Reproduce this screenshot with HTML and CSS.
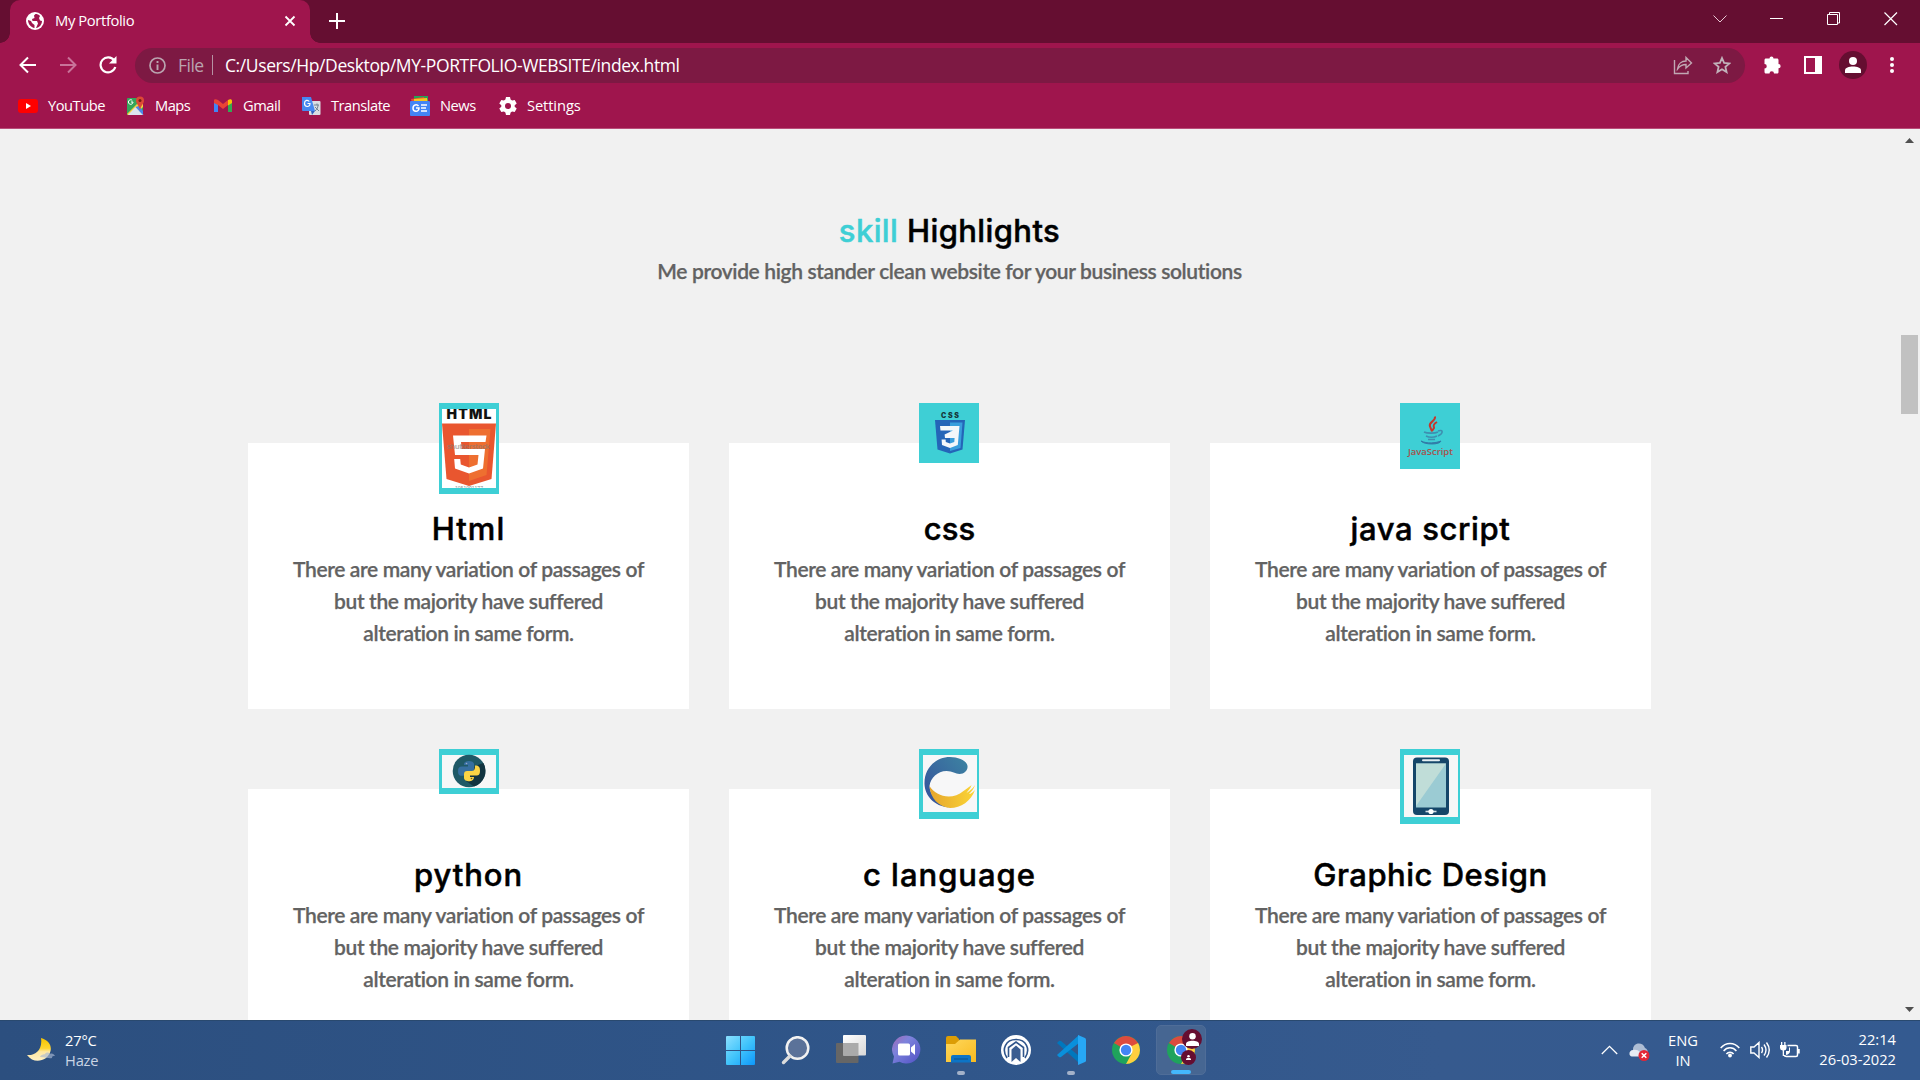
FILE: index.html
```html
<!DOCTYPE html>
<html lang="en">
<head>
<meta charset="utf-8">
<title>My Portfolio</title>
<link rel="stylesheet" href="styles.css">
</head>
<body>
<svg width="0" height="0" class="defs">
  <defs>
    <linearGradient id="win" x1="0" y1="0" x2="1" y2="1"><stop offset="0" stop-color="#8be0ff"/><stop offset=".5" stop-color="#41c4fb"/><stop offset="1" stop-color="#0d98fb"/></linearGradient>
    <linearGradient id="tv" x1="0" y1="0" x2="1" y2="1"><stop offset="0" stop-color="#fff"/><stop offset="1" stop-color="#d8d8d8"/></linearGradient>
    <linearGradient id="chat" x1="0" y1="0" x2="1" y2="1"><stop offset="0" stop-color="#a468b4"/><stop offset=".35" stop-color="#7d83dc"/><stop offset="1" stop-color="#5050c4"/></linearGradient>
    <linearGradient id="fold" x1="0" y1="0" x2="1" y2="1"><stop offset="0" stop-color="#ffd85c"/><stop offset="1" stop-color="#f8ba20"/></linearGradient>
    <linearGradient id="cblue" x1="1" y1="0" x2="0" y2="1"><stop offset="0" stop-color="#3d84a2"/><stop offset="1" stop-color="#354e9b"/></linearGradient>
    <linearGradient id="cyel" x1="0" y1="0" x2="1" y2="0"><stop offset="0" stop-color="#e5a52d"/><stop offset="1" stop-color="#fbd536"/></linearGradient>
    <linearGradient id="moon" x1="0" y1="0" x2="0" y2="1"><stop offset="0" stop-color="#f6c500"/><stop offset=".45" stop-color="#ffd52f"/><stop offset=".6" stop-color="#ffe7a0"/><stop offset="1" stop-color="#fff0c4"/></linearGradient>
    <symbol id="chrome" viewBox="0 0 28 28">
      <circle cx="14" cy="14" r="14" fill="#1fa35c"/>
      <path d="M14 14 1.900 7A14 14 0 0 1 26.100 7Z" fill="#dd4b3e"/>
      <path d="M26.100 7A14 14 0 0 1 14 28L20 17 18 7Z" fill="#ffcf3f"/>
      <path d="M14 7H26.100L20 10Z" fill="#dd4b3e"/>
      <circle cx="14" cy="14" r="6.600" fill="#fff"/><circle cx="14" cy="14" r="5.200" fill="#4285f4"/>
    </symbol>
    <symbol id="person" viewBox="0 0 16 16"><circle cx="8" cy="4" r="4"/><path d="M0 16v-2.500C0 10.500 4 9.500 8 9.500s8 1 8 4V16Z"/></symbol>
  </defs>
</svg>

<header class="browser">
  <div class="tabstrip">
    <div class="tab">
      <svg class="globe" width="18" height="18" viewBox="0 0 18 18"><circle cx="9" cy="9" r="9" fill="#fff"/><path d="M9.500 2 8 3.500 8.500 6 6 7 6.500 9H11l1 2.500-2 4.500c3.500-.5 6-3.500 6-7l-2-.5-1-2.500 1-2C13 2.500 11 2 9.500 2ZM2 8c0 4 3 7.500 6.500 8v-3L6 11 5 9Z" fill="#9f154d"/></svg>
      <span class="tab-title">My Portfolio</span>
      <svg class="tab-close" width="12" height="12" viewBox="0 0 12 12"><path d="m1.500 1.500 9 9M10.500 1.500l-9 9" stroke="#fff" stroke-width="1.800"/></svg>
    </div>
    <svg class="newtab" width="16" height="16" viewBox="0 0 16 16"><path d="M8 0v16M0 8h16" stroke="#fff" stroke-width="2"/></svg>
    <div class="winbtns">
      <svg width="14" height="14" viewBox="0 0 14 14"><path d="m.5 3.500 6.500 6.500 6.500-6.500" fill="none" stroke="#e8c7d4"/></svg>
      <svg width="14" height="14" viewBox="0 0 14 14"><path d="M0 6.500h13" stroke="#fff"/></svg>
      <svg width="14" height="14" viewBox="0 0 14 14"><path d="M.5 2.500h10v10H.5ZM2.500 2V.5h10v10.500H11" fill="none" stroke="#fff"/></svg>
      <svg width="14" height="14" viewBox="0 0 14 14"><path d="m.5.5 12.500 12.500M13 .5.5 13" stroke="#fff" stroke-width="1.200"/></svg>
    </div>
  </div>

  <div class="toolbar">
    <svg width="18" height="18" viewBox="0 0 18 18"><path d="M17 9H2M9 1.500 1.500 9 9 16.500" fill="none" stroke="#fff" stroke-width="2"/></svg>
    <svg width="18" height="18" viewBox="0 0 18 18"><path d="M1 9h15M9 1.500 16.500 9 9 16.500" fill="none" stroke="#c97399" stroke-width="2"/></svg>
    <svg width="18" height="18" viewBox="0 0 18 18"><path d="M15.200 4.500A7.500 7.500 0 1 0 16.300 11" fill="none" stroke="#fff" stroke-width="2.200"/><path d="M17.500 0v7.500H10Z" fill="#fff"/></svg>
    <div class="omnibox">
      <svg width="17" height="17" viewBox="0 0 17 17"><circle cx="8.500" cy="8.500" r="7.500" fill="none" stroke="#baa4af" stroke-width="1.700"/><path d="M8.500 7.500V13M8.500 4v2" stroke="#baa4af" stroke-width="1.900"/></svg>
      <span class="scheme">File</span><span class="bar"></span>
      <span class="url">C:/Users/Hp/Desktop/MY-PORTFOLIO-WEBSITE/index.html</span>
      <svg class="share" width="20" height="20" viewBox="0 0 20 20"><path d="M1.500 5v13.500H15V16M4.500 14C5 8.500 9 6 13 6V2.500L18.500 8 13 13v-3.500c-4 0-6 1-8.500 4.500Z" fill="none" stroke="#c1a7b3" stroke-width="1.400"/></svg>
      <svg class="star" width="18" height="18" viewBox="0 0 18 18"><path d="m9 2 2.100 4.900 5.300.5-4 3.500 1.200 5.200L9 13.300l-4.600 2.800 1.200-5.200-4-3.500 5.300-.5Z" fill="none" stroke="#c1b2ba" stroke-width="1.800"/></svg>
    </div>
    <div class="actions">
      <svg width="18" height="18" viewBox="0 0 18 18" fill="#fff"><path d="M5.500 2.500a2 2 0 0 1 4 0H13c.9 0 1.500.6 1.500 1.500v4a2 2 0 0 1 0 4.300V16c0 1-.6 1.600-1.500 1.600h-3a2.200 2.200 0 0 0-4.500 0H2c-1 0-1.500-.6-1.500-1.500v-3.600a2.200 2.200 0 0 0 0-4.500V4c0-.9.6-1.500 1.500-1.500Z"/></svg>
      <svg width="18" height="18" viewBox="0 0 18 18"><path d="M1 1h16v16H1Z" fill="none" stroke="#fff" stroke-width="2"/><path d="M11 1h6v16h-6Z" fill="#fff"/></svg>
      <span class="avatar"><svg width="16" height="16" fill="#fff"><use href="#person"/></svg></span>
      <svg class="dots" width="4" height="16" viewBox="0 0 4 16" fill="#fff"><circle cx="2" cy="2" r="2"/><circle cx="2" cy="8" r="2"/><circle cx="2" cy="14" r="2"/></svg>
    </div>
  </div>

  <nav class="bookmarks">
    <span><svg width="20" height="20" viewBox="0 0 20 20"><rect y="3" width="20" height="14" rx="3" fill="#f00"/><path d="m8 7 5 3-5 3Z" fill="#fff"/></svg><b>YouTube</b></span>
    <span><svg width="19" height="20" viewBox="0 0 19 20"><rect x="1" y="2" width="16" height="17" rx="1" fill="#35a45a"/><path d="m1 18 14-14 2 2v5L9 19H2Z" fill="#f8d13f"/><path d="m2 19 7.500-8 8 8Z" fill="#dce4ee"/><path d="m13 10 4 5v4L9.500 11Z" fill="#4b86ed"/><path d="M14 14c-1-5-4-6-4-9.500a4 4 0 0 1 8 0C18 8 15 9 14 14Z" fill="#dc4a36"/><circle cx="14" cy="4.500" r="1.500" fill="#751d15"/><path d="M7 6H5M7 6a2.300 2.300 0 1 1-.8-1.700" stroke="#fff" fill="none"/></svg><b>Maps</b></span>
    <span><svg width="19" height="20" viewBox="0 0 19 20"><path d="M0 4v12h4V8Z" fill="#4285f4"/><path d="M18 4v12h-4V8Z" fill="#34a853"/><path d="M0 4.500C0 3 2 3 4 4l5 4 5-4V9l-5 4-5-4-4-2Z" fill="#ea4335"/><path d="M14 4c2-1 4-1 4 1v2l-4 2.500Z" fill="#fbbc04"/></svg><b>Gmail</b></span>
    <span><svg width="20" height="20" viewBox="0 0 20 20"><rect x="8" y="5" width="11.500" height="14" rx="1" fill="#d9dde3"/><path d="M1 1h9l4 14H2a1 1 0 0 1-1-1Z" fill="#4688f1"/><path d="m10 15h4l-3 4Z" fill="#3061be"/><path d="M6.500 7.500H9C9 12 3.500 11 3.500 7.500S7 3.500 8.200 5.500" fill="none" stroke="#fff" stroke-width="1.200"/><path d="M13 9h5m-2-1.500V9m1 0c0 3-1 4-3 6m0-4 4 4" fill="none" stroke="#718292"/></svg><b>Translate</b></span>
    <span><svg width="20" height="20" viewBox="0 0 20 20"><path d="M4 0h14v8H4Z" fill="#23a455"/><path d="m1 3 13-2 2 6H2Z" fill="#e64c35"/><path d="m4 3 13-1 1 6H4Z" fill="#fbc41d"/><rect y="5" width="20" height="15" rx="1" fill="#4385f5"/><path d="M6 12h3c0 4.500-6 4-6 .2C3 8.500 7 8 8.500 10M11 9h6M11 12h5M11 15h6" stroke="#fff" stroke-width="1.500" fill="none"/></svg><b>News</b></span>
    <span><svg width="18" height="18" viewBox="0 0 18 18"><path d="m7 0h4l.6 2.600 1.500.9L15.700 3l2 3.500-2 1.700v1.600l2 1.700-2 3.500-2.600-.5-1.500.9L11 18H7l-.6-2.600-1.500-.9-2.600.5-2-3.500 2-1.700V8.200l-2-1.700 2-3.500 2.600.5 1.500-.9Z" fill="#fff"/><circle cx="9" cy="9" r="3" fill="#9f154d"/></svg><b class="wide">Settings</b></span>
  </nav>
</header>

<div class="viewport">
  <main>
    <div class="heading">
      <h1><em>skill</em> Highlights</h1>
      <p>Me provide high stander clean website for your business solutions</p>
    </div>
    <section class="cards">
      <article>
        <svg class="logo" width="60" height="91" viewBox="0 0 60 91"><path fill="#fff" d="M3 6h54v79H3Z"/><clipPath id="hc"><path d="M3 6h54v79H3Z"/></clipPath><g clip-path="url(#hc)"><text x="7.500" y="16" class="html-word" textLength="45">HTML</text><path d="M3 20.500h54L52.500 76 30 83 7.500 76Z" fill="#e9562f"/><path d="M30 26h21.500l-4 46L30 78Z" fill="#ee6f30"/><path d="M47.500 32.500 46.500 39H22l.7 7H46l-2 19.500-14 5-14-5-.8-9.500h6l.6 5.500 8.200 3 8.500-3L39.500 52H16l-2-19.500Z" fill="#fff"/><text x="8" y="46" class="mark" textLength="43">shutterstock</text><text x="16" y="87" class="tiny" textLength="28">1051091177</text></g></svg>
        <h2 class="t1">Html</h2>
        <p>There are many variation of passages of<br>but the majority have suffered<br>alteration in same form.</p>
      </article>
      <article>
        <svg class="logo" width="60" height="60" viewBox="0 0 60 60"><text x="22" y="14.500" class="css-word" textLength="18">CSS</text><path d="M16 17h30l-2.500 29.500L31 50.500l-12.500-4Z" fill="#2465b8"/><path d="M31 19.500h12.500L41.500 45 31 48Z" fill="#399edc"/><path d="M21 23h19.500l-1.700 19L31 45l-8-3-.4-5.500h4l.2 2.600 4.200 1.500 4.300-1.500.3-4.100H26l-.4-3.500L34 27.500H21.500Z" fill="#f3f7fa"/></svg>
        <h2 class="t2">css</h2>
        <p>There are many variation of passages of<br>but the majority have suffered<br>alteration in same form.</p>
      </article>
      <article>
        <svg class="logo" width="60" height="66" viewBox="0 0 60 66"><path d="M35 13.500c1 5-7 5.500-5 10l2 5M37 19c-5 3-3 4-3 6l-2 3" fill="none" stroke="#c5382c" stroke-width="2"/><path d="M24 29c3 1.500 11 1.500 14 0M26 33c3 1.500 8 1.500 11 0M28 36.500h7M38 28c5-2 6 2 0 5" fill="none" stroke="#3e8fb0" stroke-width="1.600"/><path d="M21 38c6 3 15 2 20 0-1 4-17 4-20 0Z" fill="#327ca8" stroke="#327ca8"/><text x="8" y="51.500" class="js-word" textLength="45">JavaScript</text></svg>
        <h2 class="t3">java script</h2>
        <p>There are many variation of passages of<br>but the majority have suffered<br>alteration in same form.</p>
      </article>
      <article>
        <svg class="logo" width="60" height="45" viewBox="0 0 60 45"><path fill="#f7f7f7" d="M3 6h54v33H3Z"/><circle cx="30" cy="22" r="16.300" fill="#1f5966"/><path d="m36 17 8.500-3A16.300 16.300 0 0 1 35 37.500L27 32Z" fill="#123440"/><path d="M25 15c0-4 10-4 10 0v5c0 2-1 2.500-3 2.500h-4c-2 0-3 1-3 4-5 1-6-1-6-4.500 0-3 1-4.500 4-4.500h6V16h-4Z" fill="#366f9f"/><path d="M36 16.500c4-.5 5 2 5 5 0 4-1 5-4 5h-6V28h4c0 6-10 5-10 1v-4c0-2 1-3 3-3h4c3 0 4-1 4-5.500Z" fill="#fbd445"/><circle cx="27.500" cy="14.500" r=".8" fill="#9ac"/><circle cx="32.500" cy="29.500" r=".8" fill="#65562c"/></svg>
        <h2 class="t4">python</h2>
        <p>There are many variation of passages of<br>but the majority have suffered<br>alteration in same form.</p>
      </article>
      <article>
        <svg class="logo" width="60" height="70" viewBox="0 0 60 70"><path fill="#f7f7f8" d="M4 6h54v57H4Z"/><path d="M30 58.500C15 57 6 47 5.500 35 5 19 17 8 31 8c9 0 17 4 17.500 9 .5 4-3 8-8 8-4 0-7-3-13-3-9 0-16 7-17 15 0 9 9 18 19.500 21.500Z" fill="url(#cblue)"/><path d="M10.500 37c6 10 22 15 34 5 4-3 7-5 8-6-1 4-4 6-5 8 3-2 6-4 8.500-8-1 4-4 7-6 9 2 0 4-2 6-4C52 52 42 59 31 59 20 58 11 49 10.500 37Z" fill="url(#cyel)"/></svg>
        <h2 class="t5">c language</h2>
        <p>There are many variation of passages of<br>but the majority have suffered<br>alteration in same form.</p>
      </article>
      <article>
        <svg class="logo" width="60" height="75" viewBox="0 0 60 75"><path fill="#f7f7f7" d="M4 6h54v62H4Z"/><rect x="13" y="8.500" width="36" height="57.500" rx="4" fill="#154669"/><path d="M16 14.500h30v44H16Z" fill="#9bcbd3"/><path d="M16 14.500h30L16 57Z" fill="#c0ddd8"/><path d="M23 11.300h16" stroke="#e8eef2" stroke-width="2" stroke-linecap="round"/><path d="M25.500 62.500h11" stroke="#d4dee6" stroke-width="1.600"/><circle cx="31" cy="62.500" r="2.600" fill="#fff"/></svg>
        <h2 class="t6">Graphic Design</h2>
        <p>There are many variation of passages of<br>but the majority have suffered<br>alteration in same form.</p>
      </article>
    </section>
  </main>
  <div class="scroll">
    <svg width="9" height="5" viewBox="0 0 9 5"><path d="M4.500 0 9 5H0Z" fill="#505050"/></svg>
    <div class="thumb"></div>
    <svg width="9" height="5" viewBox="0 0 9 5"><path d="M4.500 5 9 0H0Z" fill="#505050"/></svg>
  </div>
</div>

<footer class="taskbar">
  <div class="weather">
    <svg width="30" height="28" viewBox="0 0 30 28"><path d="M15 2c7 2 11 7 9.500 13C22 25 8 29 1 19c7 1 16-4 14-17Z" fill="url(#moon)"/><path d="M14 21c1-3 4-2 5-3 1-2 4-2 5 0 2-1 4 0 5 2-2 0-3 0-3 2-3 1-6-1-12-1Z" fill="#a9b9d2" opacity=".65"/></svg>
    <div><span class="w1">27°C</span><span class="w2">Haze</span></div>
  </div>
  <div class="apps">
    <div class="start"><svg width="29" height="29" viewBox="0 0 29 29" fill="url(#win)"><path d="M1 0h13v14H0V1q0-1 1-1ZM15 0h13q1 0 1 1v13H15ZM0 15h14v14H1q-1 0-1-1ZM15 15h14v13q0 1-1 1H15Z"/></svg></div>
    <div class="start"><svg width="29" height="29" viewBox="0 0 29 29"><circle cx="16.500" cy="12" r="10.800" fill="#5b7299" stroke="#f2f2f2" stroke-width="2.500"/><path d="m9 20-6.500 6.500" stroke="#dcdcdc" stroke-width="3.400" stroke-linecap="round"/></svg></div>
    <div><svg width="30" height="29" viewBox="0 0 30 29"><rect y="8" width="22.500" height="20" rx="1" fill="#666"/><rect x="7" width="23" height="20.500" rx="1" fill="url(#tv)"/><path d="M7 8h15.500v12.500H7Z" fill="#aaa"/></svg></div>
    <div><svg width="29" height="29" viewBox="0 0 29 29"><path d="M14.500.5a14 14 0 1 1-7 26.200L.5 28.500 2 21.500A14 14 0 0 1 14.500.5Z" fill="url(#chat)"/><rect x="6" y="8.500" width="12" height="12" rx="1.500" fill="#fff"/><path d="m19 12.500 4-3.500v11l-4-3.500Z" fill="#fff"/></svg></div>
    <div class="open"><svg width="30" height="29" viewBox="0 0 30 29"><path d="M0 3q0-2 2-2h8l3 3v5H0Z" fill="#dc9d05"/><path d="M0 9h9l5-4.500h16V27H0Z" fill="url(#fold)"/><path d="M5 27.500V22q0-2 2-2h16q2 0 2 2v5.500Z" fill="#0d74c5"/><path d="M8 24h14" stroke="#0a508c"/></svg></div>
    <div><svg width="30" height="30" viewBox="0 0 30 30"><circle cx="15" cy="15" r="15" fill="#fff"/><path d="M6 23C0 14 5 4.500 15 4.500S30 14 24 23M7.500 22v-9.500L15 7l7.500 5.500V22" fill="none" stroke="#30558b" stroke-width="1.600"/><path d="M10.500 27V14.500L15 10.500l4.500 4V27L15 23Z" fill="#3a5d91"/></svg></div>
    <div class="open"><svg width="30" height="30" viewBox="0 0 30 30"><path d="m1 8 2-2q1-.7 2 0l18 15v7Z" fill="#0077bd"/><path d="m1 20 2 2q1 .7 2 0L23 8V0Z" fill="#0990db"/><path d="m22 0 7 3q1 .5 1 1.500v21q0 1-1 1.500l-7 3Z" fill="#27a7f5"/></svg></div>
    <div><svg width="28" height="28"><use href="#chrome"/></svg></div>
    <div class="active"><svg width="28" height="28"><use href="#chrome"/></svg>
      <span class="badge big"><svg width="13" height="13" fill="#fff"><use href="#person"/></svg></span>
      <span class="badge small"><svg width="5" height="5" fill="#fff"><use href="#person"/></svg></span>
    </div>
  </div>
  <div class="tray">
    <svg class="up" width="17" height="10" viewBox="0 0 17 10"><path d="m.8 9 7.700-7.700L16.200 9" fill="none" stroke="#fff" stroke-width="1.300"/></svg>
    <svg class="cloud" width="21" height="18" viewBox="0 0 21 18"><path d="M4 6C5-1 14-1 16 5q3 1 3 6H4Z" fill="#aebdd4"/><path d="M3 13.500C-1 13 0 7 4 7q4-1 7 2l4 4.500Z" fill="#e6ebf3"/><circle cx="15" cy="12.500" r="5.500" fill="#e32636"/><path d="m12.700 10.200 4.600 4.600m0-4.600-4.600 4.600" stroke="#fff" stroke-width="1.500"/></svg>
    <div class="lang"><span>ENG</span><span>IN</span></div>
    <div class="status">
      <svg width="20" height="16" viewBox="0 0 20 16"><path d="M.7 6c5-6 13.600-6 18.600 0M3.600 9c3.500-4.200 9.300-4.200 12.800 0M6.400 12c2-2.500 5.200-2.500 7.200 0" fill="none" stroke="#fff" stroke-width="1.500"/><circle cx="10" cy="13.500" r="1.900" fill="#fff"/></svg>
      <svg width="20" height="18" viewBox="0 0 20 18"><path d="M.8 6H4l5-4.500v15L4 12H.8ZM11.500 6q2 3 0 6M14 3.500q4 5.500 0 11M16.500 1.500q5.500 7.500 0 15" fill="none" stroke="#fff" stroke-width="1.400"/></svg>
      <svg width="20" height="17" viewBox="0 0 20 17"><path d="M7.500 3.500h8.500q1.500 0 1.500 1.500v8q0 1.500-1.500 1.500H6.500q-2 0-2-1.500M19 7v4.500" fill="none" stroke="#fff" stroke-width="1.500"/><path d="M0 3h6.500v3q0 2-2.500 2.500V14H2.700V8.500Q0 8 0 6ZM1 0h1.300v3H1ZM4.200 0h1.300v3H4.200ZM6 13V9h3V5.500h1V9q0 3-4 4Z" fill="#fff"/></svg>
    </div>
    <div class="clock"><span>22:14</span><span>26-03-2022</span></div>
  </div>
</footer>
</body>
</html>
```
FILE: styles.css
```css
* { box-sizing: border-box; }
body { margin: 0; width: 1920px; height: 1080px; overflow: hidden; display: flex; flex-direction: column; font-family: "Open Sans", "Noto Sans", sans-serif; }
svg { display: block; flex: none; }
.defs { position: absolute; }

.browser { height: 129px; background: #9f154d; color: #fff; border-bottom: 1px solid #b84e79; }
.tabstrip { height: 43px; background: #650e31; display: flex; align-items: center; padding-left: 10px; }
.tab { position: relative; width: 300px; height: 43px; background: #9f154d; border-radius: 10px 10px 0 0; display: flex; align-items: center; padding: 0 14px 2px 16px; }
.tab::before, .tab::after { content: ""; position: absolute; bottom: 0; width: 10px; height: 10px; }
.tab::before { left: -10px; background: radial-gradient(circle at 0 0, #650e31 9.5px, #9f154d 10px); }
.tab::after { right: -10px; background: radial-gradient(circle at 100% 0, #650e31 9.5px, #9f154d 10px); }
.tab-title { margin-left: 11px; padding-bottom: 2px; font-size: 14.8px; letter-spacing: -.4px; }
.tab-close { margin-left: auto; }
.newtab { margin: 0 0 1px 19px; }
.winbtns { margin-left: auto; display: flex; gap: 43px; padding: 0 22px 6px 0; }

.toolbar { height: 44px; display: flex; align-items: center; padding-left: 19px; gap: 22px; }
.omnibox { width: 1610px; height: 35px; border-radius: 18px; background: #7d1943; display: flex; align-items: center; padding: 0 14px 0 14px; margin-left: -4px; }
.scheme { margin-left: 12px; color: #baa4af; font-size: 17.5px; letter-spacing: -.5px; width: 26px; }
.bar { width: 1px; height: 20px; background: #b692a3; margin: 0 12px 0 8px; }
.url { font-size: 17.5px; letter-spacing: -.4px; }
.share { margin-left: auto; }
.star { margin-left: 20px; }
.actions { display: flex; align-items: center; margin-left: -3px; }
.actions > * { margin-right: 22px; }
.avatar { width: 28px; height: 28px; border-radius: 50%; background: #650e31; display: grid; place-items: center; margin-left: -5px; }
.actions .avatar { margin-right: 23px; }
.bookmarks { height: 38px; display: grid; grid-template-columns: 108px 88px 87px 109px 89px 1fr; padding: 0 0 1px 18px; }
.bookmarks span { display: flex; align-items: center; gap: 10px; }
.bookmarks b { font-weight: 400; font-size: 14.7px; letter-spacing: -.5px; padding-bottom: 1px; }
.bookmarks .wide { letter-spacing: -.1px; }

.viewport { height: 891px; display: flex; background: #f1f1f1; }
main { width: 1899px; padding: 81px 0 0 248px; overflow: hidden; }
.heading { width: 1403px; text-align: center; }
h1, h2 { margin: 0; font: 500 31px/42px Inter, sans-serif; color: #000; -webkit-text-stroke: .5px; }
h1 { letter-spacing: .4px; }
h1 em { font-style: normal; color: #3ecfd5; }
.t1, .t5 { letter-spacing: 1px; }
.t2 { letter-spacing: .1px; }
.t3 { letter-spacing: .65px; }
.t4 { letter-spacing: .9px; }
.t6 { letter-spacing: .5px; }
p { margin: 0; font: 600 21px/32px Lato, sans-serif; letter-spacing: -.37px; color: #626262; -webkit-text-stroke: .25px #626262; }
.heading p { margin-top: 3px; }
.cards { width: 1403px; margin-top: 156px; display: grid; grid-template-columns: repeat(3, 441px); grid-auto-rows: 266px; gap: 80px 40px; }
article { position: relative; background: #fff; text-align: center; padding-top: 65px; }
article p { margin-top: 3px; }
.logo { position: absolute; top: -40px; left: 191px; background: #3ecfd5; }
article:nth-child(3n) .logo, article:nth-child(3n + 2) .logo { left: 190px; }
.html-word { font: 900 14px Inter, sans-serif; fill: #111; }
.css-word { font: 900 7px Inter, sans-serif; fill: #17383c; }
.js-word { font: 600 9.5px "Open Sans", sans-serif; fill: #a8514b; }
.mark { font: 700 7.5px "Open Sans", sans-serif; fill: #8a7a72; opacity: .6; }
.tiny { font: 5px "Open Sans", sans-serif; fill: #888; }

.scroll { width: 21px; display: flex; flex-direction: column; align-items: center; padding: 9px 1px 8px 0; }
.thumb { width: 17px; height: 79px; background: #c1c1c1; margin: 192px 0 auto 1px; }

.taskbar { height: 60px; display: flex; color: #fff; font-size: 14.7px; line-height: 20px; background: linear-gradient(90deg, #2c4f7f, #30568a 50%, #365a8e 75%, #345a90); position: relative; border-top: 1px solid #29496f; }
.taskbar span { display: block; }
.weather { width: 716px; display: flex; gap: 9px; padding: 9px 0 0 26px; }
.weather svg { margin-top: 6px; }
.w2 { color: #cad5e5; letter-spacing: -.2px; }
.w1 { letter-spacing: -.2px; }
.apps { display: flex; gap: 5px; padding-top: 4px; }
.apps > div { position: relative; width: 50px; height: 50px; display: grid; place-items: center; padding-bottom: 1px; }
.apps > .start { padding: 0 2px 0 0; }
.apps .active { background: #466692; border: 1px solid #4f6d98; border-radius: 5px; }
.open::after, .active::after { content: ""; position: absolute; bottom: 0; left: 21px; width: 8px; height: 4px; border-radius: 2px; background: #a4b2c9; }
.active::after { left: 14px; width: 20px; background: #44b8fc; }
.badge { position: absolute; border-radius: 50%; background: #650e31; }
.apps .badge { display: grid; place-items: center; }
.big { width: 20px; height: 20px; left: 25px; top: 3px; }
.small { width: 15px; height: 15px; left: 24px; top: 24px; }
.tray { margin-left: auto; display: flex; align-items: flex-start; padding: 9px 24px 0 0; text-align: center; }
.up { margin: 15px 11px 0 0; }
.cloud { margin: 13px 18px 0 0; }
.lang { width: 30px; }
.status { display: flex; align-items: center; gap: 10px; margin: 11px 0 0 22px; }
.clock { width: 96px; margin-top: -1px; text-align: right; }
```
